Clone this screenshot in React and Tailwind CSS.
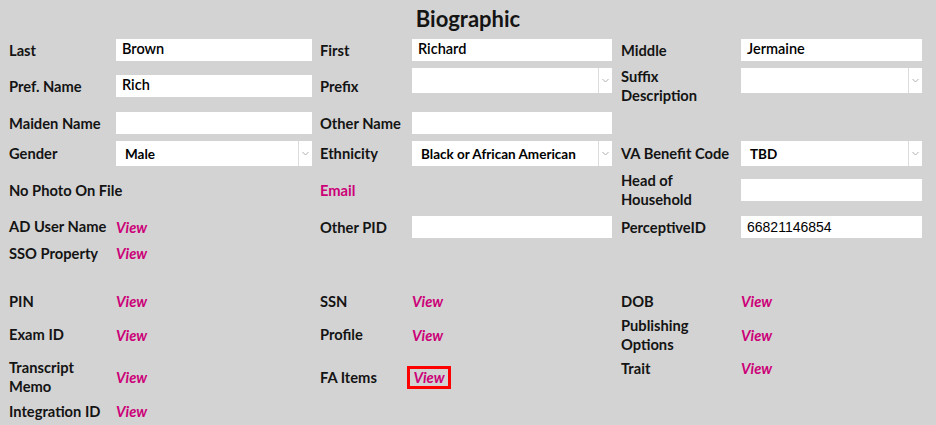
import React from "react";

const Chevron = () => (
  <svg width="7" height="5" viewBox="0 0 7 5" className="block">
    <path d="M0.5 1 L3.5 4 L6.5 1" fill="none" stroke="#b0b0b0" strokeWidth="1" />
  </svg>
);

const TextInput = ({ w, value, mono, mt }) => (
  <div className={`${w} h-[22px] bg-white flex items-center px-[6px] ${mono ? "" : "pb-[2px]"} ${mt || ""}`}>
    <span className={mono ? "font-['Liberation_Sans'] font-normal text-[14px] text-black" : "text-[14.5px] font-semibold text-black"}>{value}</span>
  </div>
);

const Select = ({ w, value, extra }) => (
  <div className={`${w} h-[25px] bg-white flex ${extra || ""}`}>
    <div className="flex-1 flex items-center pl-[9px] pt-[2px] text-[13.5px] font-bold text-black">{value}</div>
    <div className="w-[14px] border-l border-[#dcdcdc] flex items-center justify-center">
      <Chevron />
    </div>
  </div>
);

const View = () => <span className="italic font-bold text-[#cc0077]">View</span>;

const C1 = "flex items-center w-[303px]";
const C2 = "flex items-center w-[292px] ml-[8px]";
const C3 = "flex items-center w-[301px] ml-[9px]";
const L1 = "w-[107px] shrink-0 leading-[19px]";
const L2 = "w-[92px] shrink-0 leading-[19px]";
const L3 = "w-[120px] shrink-0 leading-[19px]";

export default function App() {
  return (
    <div className="w-[936px] h-[425px] bg-[#d3d3d3] font-['Lato',_sans-serif] font-bold text-[14.7px] text-[#141414] overflow-hidden">
      <div className="h-[36px] flex items-center justify-center text-[22px]">Biographic</div>

      {/* Row 1 */}
      <div className="flex items-center h-[28px] pl-[9px]">
        <div className={C1}><div className={L1}>Last</div><TextInput w="w-[196px]" value="Brown" /></div>
        <div className={C2}><div className={L2}>First</div><TextInput w="w-[200px]" value="Richard" /></div>
        <div className={C3}><div className={L3}>Middle</div><TextInput w="w-[181px]" value="Jermaine" /></div>
      </div>

      {/* Row 2 */}
      <div className="flex items-center h-[44px] pl-[9px]">
        <div className={C1}><div className={L1}>Pref. Name</div><TextInput w="w-[196px]" value="Rich" /></div>
        <div className={C2}><div className={L2}>Prefix</div><Select w="w-[200px]" value="" extra="mb-[11px]" /></div>
        <div className={C3}><div className={L3}>Suffix<br />Description</div><Select w="w-[181px]" value="" extra="mb-[11px]" /></div>
      </div>

      {/* Row 3 */}
      <div className="flex items-center h-[30px] pl-[9px]">
        <div className={C1}><div className={L1}>Maiden Name</div><TextInput w="w-[196px]" value="" /></div>
        <div className={C2}><div className={L2}>Other Name</div><TextInput w="w-[200px]" value="" /></div>
        <div className={C3}></div>
      </div>

      {/* Row 4 */}
      <div className="flex items-center h-[30px] pl-[9px]">
        <div className={C1}><div className={L1}>Gender</div><Select w="w-[196px]" value="Male" /></div>
        <div className={C2}><div className={L2}>Ethnicity</div><Select w="w-[200px]" value="Black or African American" /></div>
        <div className={C3}><div className={L3}>VA Benefit Code</div><Select w="w-[181px]" value="TBD" /></div>
      </div>

      {/* Row 5 */}
      <div className="flex items-center h-[44px] pl-[9px]">
        <div className={C1}><div className="leading-[19px]">No Photo On File</div></div>
        <div className={C2}><div className="leading-[19px] text-[#cc0077]">Email</div></div>
        <div className={C3}><div className={L3}>Head of<br />Household</div><TextInput w="w-[181px]" value="" /></div>
      </div>

      {/* Row 6 */}
      <div className="flex items-center h-[30px] pl-[9px]">
        <div className={C1}><div className={L1}>AD User Name</div><View /></div>
        <div className={C2}><div className={L2}>Other PID</div><TextInput w="w-[200px]" value="" /></div>
        <div className={C3}><div className={L3}>PerceptiveID</div><TextInput w="w-[181px]" value="66821146854" mono /></div>
      </div>

      {/* Row 7 */}
      <div className="flex items-center h-[22px] pl-[9px]">
        <div className={C1}><div className={L1}>SSO Property</div><View /></div>
      </div>

      <div className="h-[21px]" />

      {/* Row 8 */}
      <div className="flex items-center h-[33px] pl-[9px]">
        <div className={C1}><div className={L1}>PIN</div><View /></div>
        <div className={C2}><div className={L2}>SSN</div><View /></div>
        <div className={C3}><div className={L3}>DOB</div><View /></div>
      </div>

      {/* Row 9 */}
      <div className="flex items-center h-[34px] pl-[9px]">
        <div className={C1}><div className={L1}>Exam ID</div><View /></div>
        <div className={C2}><div className={L2}>Profile</div><View /></div>
        <div className={C3}><div className={L3}>Publishing<br />Options</div><View /></div>
      </div>

      {/* Row 10 */}
      <div className="flex items-center h-[50px] pl-[9px]">
        <div className={C1}><div className={L1}>Transcript<br />Memo</div><View /></div>
        <div className={C2}>
          <div className="w-[87px] shrink-0 leading-[19px]">FA Items</div>
          <div className="w-[44px] h-[23px] border-[3px] border-[#ff0000] flex items-center justify-center"><View /></div>
        </div>
        <div className="flex items-start self-start pt-[7px] w-[301px] ml-[9px]"><div className={L3}>Trait</div><span className="leading-[19px]"><View /></span></div>
      </div>

      {/* Row 11 */}
      <div className="flex items-center h-[18px] pl-[9px]">
        <div className={C1}><div className={L1}>Integration ID</div><View /></div>
      </div>
    </div>
  );
}
